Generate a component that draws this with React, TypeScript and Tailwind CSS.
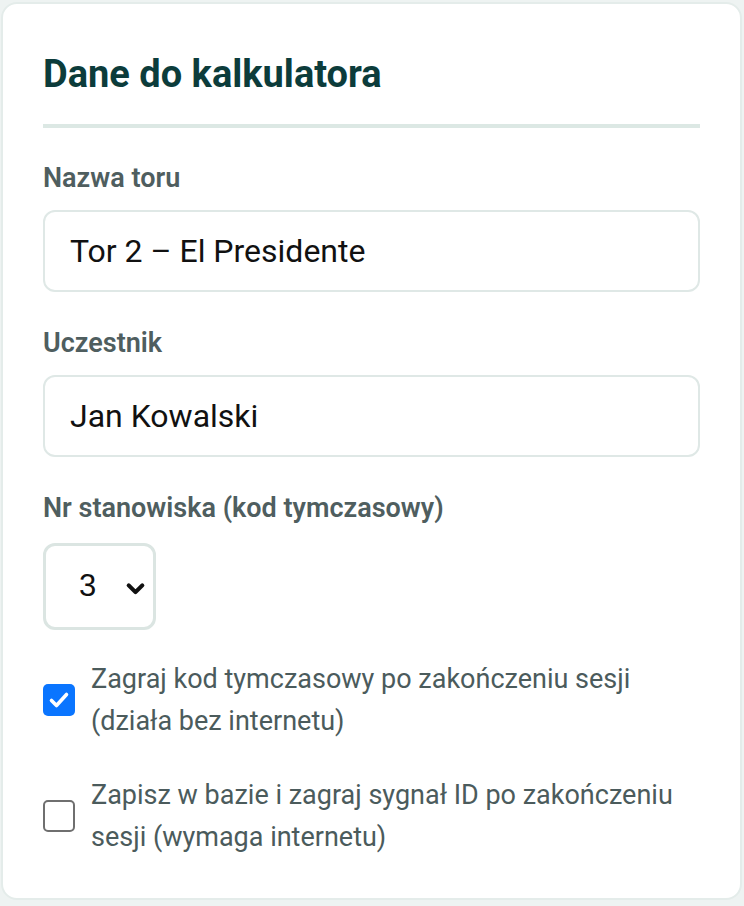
import { useState } from "react";

const font = { fontFamily: "Roboto, 'Liberation Sans', sans-serif" };

function Field({ label, value }: { label: string; value: string }) {
  return (
    <div className="flex flex-col">
      <label className="text-[27px] leading-[32px] font-semibold text-[#4f5e5f]">
        {label}
      </label>
      <input
        readOnly
        value={value}
        className="mt-[16px] h-[82px] w-full rounded-[12px] border-2 border-[#dfe8e6] bg-white px-[25px] text-[32px] text-[#111] outline-none"
        style={font}
      />
    </div>
  );
}

function Check({
  checked,
  onToggle,
  lines,
}: {
  checked: boolean;
  onToggle: () => void;
  lines: string[];
}) {
  return (
    <label className="flex cursor-pointer items-center gap-[16px]" onClick={onToggle}>
      {checked ? (
        <span className="flex h-[32px] w-[32px] shrink-0 items-center justify-center rounded-[5px] bg-[#0a75ff]">
          <svg viewBox="0 0 24 24" className="h-[24px] w-[24px]" fill="none">
            <path
              d="M4.5 12.5l5 5L19.5 6.5"
              stroke="white"
              strokeWidth="3.6"
              strokeLinecap="round"
              strokeLinejoin="round"
            />
          </svg>
        </span>
      ) : (
        <span className="h-[32px] w-[32px] shrink-0 rounded-[5px] border-2 border-[#6f6f6f] bg-white" />
      )}
      <span className="text-[27px] leading-[42px] text-[#4b5b5c]">
        {lines.map((l) => (
          <span key={l} className="block">
            {l}
          </span>
        ))}
      </span>
    </label>
  );
}

export default function App() {
  const [a, setA] = useState(true);
  const [b, setB] = useState(false);
  return (
    <div className="min-h-[906px] bg-[#eef3f2] p-[2px_2px_3px_1px]" style={font}>
      <div className="rounded-[16px] border-2 border-[#e4ecea] bg-white px-[40px] pt-[48px] pb-[40px]">
        <h2 className="text-[38px] leading-[44px] font-bold text-[#0c3c3b]">
          Dane do kalkulatora
        </h2>
        <div className="mt-[28px] h-[4px] bg-[#dce8e4]" />

        <div className="mt-[34px] flex flex-col gap-[35px]">
          <Field label="Nazwa toru" value="Tor 2 – El Presidente" />
          <Field label="Uczestnik" value="Jan Kowalski" />
          <div className="flex flex-col">
            <label className="text-[27px] leading-[32px] font-semibold text-[#4f5e5f]">
              Nr stanowiska (kod tymczasowy)
            </label>
            <div className="relative mt-[19px] h-[87px] w-[113px]">
              <select
                defaultValue="3"
                className="h-full w-full appearance-none rounded-[12px] border-[3px] border-[#dbe5e2] bg-white pl-[33px] text-[31px] text-[#111] outline-none"
                style={{ fontFamily: "'Liberation Sans', Arial, sans-serif" }}
              >
                {[1, 2, 3, 4, 5, 6].map((n) => (
                  <option key={n} value={n}>
                    {n}
                  </option>
                ))}
              </select>
              <svg
                viewBox="0 0 24 24"
                className="pointer-events-none absolute right-[8px] top-[33px] h-[25px] w-[25px]"
                fill="none"
              >
                <path
                  d="M5.5 9l6.5 6.5L18.5 9"
                  stroke="#111"
                  strokeWidth="4"
                  strokeLinecap="round"
                  strokeLinejoin="round"
                />
              </svg>
            </div>
          </div>
        </div>

        <div className="mt-[28px] flex flex-col gap-[32px]">
          <Check
            checked={a}
            onToggle={() => setA(!a)}
            lines={["Zagraj kod tymczasowy po zakończeniu sesji", "(działa bez internetu)"]}
          />
          <Check
            checked={b}
            onToggle={() => setB(!b)}
            lines={["Zapisz w bazie i zagraj sygnał ID po zakończeniu", "sesji (wymaga internetu)"]}
          />
        </div>
      </div>
    </div>
  );
}
